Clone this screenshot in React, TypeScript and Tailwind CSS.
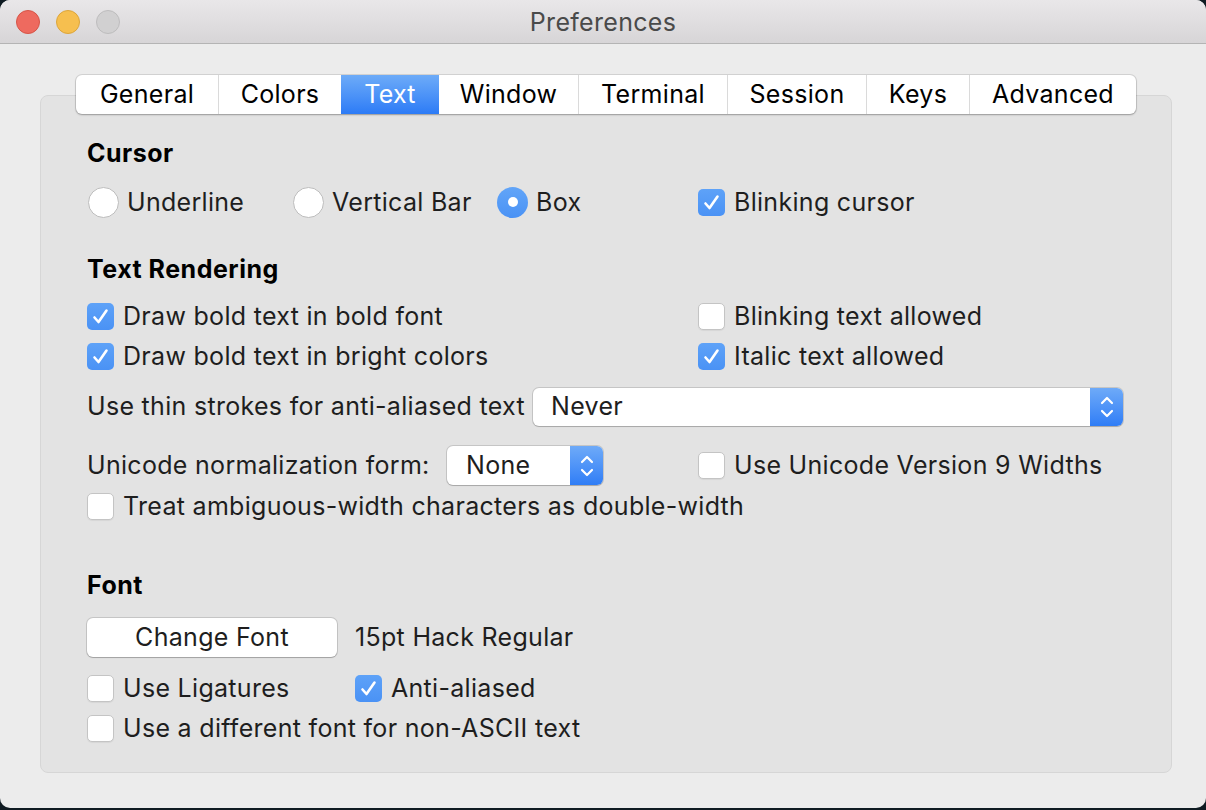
import React from 'react';

const font = { fontFamily: 'Inter, "Noto Sans", sans-serif' };

const tabs: { label: string; w: string }[] = [
  { label: 'General', w: 'w-[142px]' },
  { label: 'Colors', w: 'w-[123px]' },
  { label: 'Text', w: 'w-[98px]' },
  { label: 'Window', w: 'w-[139px]' },
  { label: 'Terminal', w: 'w-[149px]' },
  { label: 'Session', w: 'w-[139px]' },
  { label: 'Keys', w: 'w-[103px]' },
  { label: 'Advanced', w: 'w-[167px]' },
];

const Check = ({ on }: { on?: boolean }) =>
  on ? (
    <span className="w-[27px] h-[27px] shrink-0 rounded-[5px] bg-gradient-to-b from-[#5ea2f8] to-[#4a92f5] flex items-center justify-center">
      <svg width="27" height="27" viewBox="0 0 27 27" fill="none">
        <path d="M7.5 14.5 L11.5 19 L19.5 7.5" stroke="white" strokeWidth="2.6" strokeLinecap="round" strokeLinejoin="round" />
      </svg>
    </span>
  ) : (
    <span className="w-[27px] h-[27px] shrink-0 rounded-[5px] bg-white border border-[#c4c4c4] shadow-[0_1px_1px_rgba(0,0,0,0.06)]" />
  );

const CheckRow = ({ on, label, className = '' }: { on?: boolean; label: string; className?: string }) => (
  <div className={`flex items-center h-[32px] gap-[9px] ${className}`}>
    <Check on={on} />
    <span className="text-[25px] text-[#1e1e1e] leading-none whitespace-nowrap">{label}</span>
  </div>
);

const Radio = ({ on, label, w }: { on?: boolean; label: string; w: string }) => (
  <div className={`flex items-center h-[32px] gap-[8px] pl-[1px] ${w}`}>
    {on ? (
      <span className="w-[31px] h-[31px] shrink-0 rounded-full bg-gradient-to-b from-[#62a5f8] to-[#4a92f5] flex items-center justify-center">
        <span className="w-[10px] h-[10px] rounded-full bg-white" />
      </span>
    ) : (
      <span className="w-[31px] h-[31px] shrink-0 rounded-full bg-white border border-[#bdbdbd]" />
    )}
    <span className="text-[25px] text-[#1e1e1e] leading-none whitespace-nowrap">{label}</span>
  </div>
);

const Stepper = () => (
  <svg width="16" height="28" viewBox="0 0 16 28" fill="none">
    <path d="M3 10 L8 5 L13 10" stroke="white" strokeWidth="2.2" strokeLinecap="round" strokeLinejoin="round" />
    <path d="M3 18 L8 23 L13 18" stroke="white" strokeWidth="2.2" strokeLinecap="round" strokeLinejoin="round" />
  </svg>
);

const Select = ({ value, w, h, pl }: { value: string; w: string; h: string; pl: string }) => (
  <div className={`flex ${w} ${h} rounded-[6px] bg-white shadow-[0_0_0_1px_rgba(0,0,0,0.13),0_1px_1px_rgba(0,0,0,0.15)] overflow-hidden`}>
    <div className={`flex-1 flex items-center ${pl} text-[25px] text-[#1e1e1e]`}>{value}</div>
    <div className="w-[33px] bg-gradient-to-b from-[#6eaaf8] to-[#2f7df6] flex items-center justify-center">
      <Stepper />
    </div>
  </div>
);

const Heading = ({ children, className = '' }: { children: React.ReactNode; className?: string }) => (
  <div className={`h-[32px] flex items-center text-[25px] font-bold text-black tracking-[0.5px] ${className}`}>{children}</div>
);

export default function App() {
  return (
    <div className="w-[1206px] h-[810px] bg-[#0f1b22] overflow-hidden tracking-[0.3px]" style={font}>
      <div className="w-[1206px] h-[808px] bg-[#ececec] rounded-[10px] overflow-hidden flex flex-col">
        {/* title bar */}
        <div className="h-[44px] shrink-0 bg-gradient-to-b from-[#e9e7e9] to-[#d7d5d7] border-b border-[#b4b4b4] flex items-center relative">
          <div className="flex items-center gap-[16px] pl-[16px]">
            <span className="w-[24px] h-[24px] rounded-full bg-[#ee6a5f] border border-[#d65447]" />
            <span className="w-[24px] h-[24px] rounded-full bg-[#f6bf4f] border border-[#dca53b]" />
            <span className="w-[24px] h-[24px] rounded-full bg-[#d1d0d1] border border-[#bdbcbd]" />
          </div>
          <div className="absolute inset-0 pt-[3px] flex items-center justify-center text-[25px] text-[#4a4a4a] pointer-events-none">
            Preferences
          </div>
        </div>

        {/* body */}
        <div className="pt-[51px] pl-[40px]">
          <div className="w-[1132px] bg-[#e3e3e3] border border-[#d6d6d6] rounded-[8px] pb-[28px]">
            <div className="-mt-[21px] mx-auto w-[1060px] h-[39px] flex bg-white rounded-[6px] shadow-[0_0_0_1px_rgba(0,0,0,0.1),0_1px_2px_rgba(0,0,0,0.25)] overflow-hidden">
              {tabs.map((t, i) => (
                <div
                  key={t.label}
                  className={`${t.w} h-full flex items-center justify-center pt-[1px] text-[25px] ${
                    t.label === 'Text'
                      ? 'bg-gradient-to-b from-[#6dabf8] to-[#2c7bf6] text-white'
                      : 'text-black'
                  } ${i > 0 && t.label !== 'Text' && tabs[i - 1].label !== 'Text' ? 'border-l border-[#dadada]' : ''}`}
                >
                  {t.label}
                </div>
              ))}
            </div>

            <div className="pl-[46px]">
              <Heading className="mt-[24px]">Cursor</Heading>
              <div className="flex mt-[16px]">
                <Radio label="Underline" w="w-[205px]" />
                <Radio label="Vertical Bar" w="w-[204px]" />
                <Radio on label="Box" w="w-[202px]" />
                <CheckRow on label="Blinking cursor" />
              </div>

              <Heading className="mt-[36px]">Text Rendering</Heading>
              <div className="flex mt-[14px]">
                <CheckRow on label="Draw bold text in bold font" className="w-[611px]" />
                <CheckRow label="Blinking text allowed" />
              </div>
              <div className="flex mt-[8px]">
                <CheckRow on label="Draw bold text in bright colors" className="w-[611px]" />
                <CheckRow on label="Italic text allowed" />
              </div>

              <div className="flex items-center mt-[16px] gap-[8px]">
                <span className="text-[25px] text-[#1e1e1e] whitespace-nowrap">Use thin strokes for anti-aliased text</span>
                <div className="ml-auto mr-[48px]">
                  <Select value="Never" w="w-[590px]" h="h-[38px]" pl="pl-[18px]" />
                </div>
              </div>

              <div className="flex items-center mt-[20px]">
                <div className="w-[611px] flex items-center">
                  <span className="text-[25px] text-[#1e1e1e] whitespace-nowrap w-[360px]">Unicode normalization form:</span>
                  <Select value="None" w="w-[156px]" h="h-[39px]" pl="pl-[19px]" />
                </div>
                <CheckRow label="Use Unicode Version 9 Widths" />
              </div>
              <CheckRow label="Treat ambiguous-width characters as double-width" className="mt-[5px]" />

              <Heading className="mt-[48px]">Font</Heading>
              <div className="flex items-center mt-[16px]">
                <div className="w-[250px] h-[39px] bg-white rounded-[6px] shadow-[0_0_0_1px_rgba(0,0,0,0.13),0_1px_1px_rgba(0,0,0,0.18)] flex items-center justify-center text-[25px] text-[#1e1e1e]">
                  Change Font
                </div>
                <span className="ml-[18px] text-[25px] text-[#1e1e1e]">15pt Hack Regular</span>
              </div>
              <div className="flex mt-[15px]">
                <CheckRow label="Use Ligatures" className="w-[268px]" />
                <CheckRow on label="Anti-aliased" />
              </div>
              <CheckRow label="Use a different font for non-ASCII text" className="mt-[8px]" />
            </div>
          </div>
        </div>
      </div>
    </div>
  );
}
